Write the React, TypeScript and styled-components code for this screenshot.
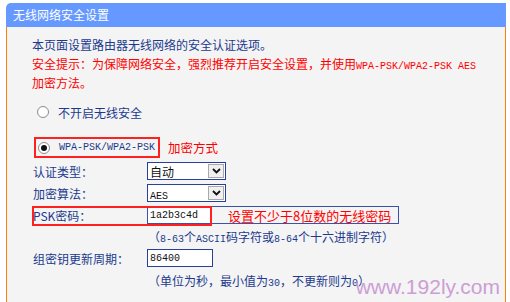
import React from "react";
import styled, { createGlobalStyle } from "styled-components";

const GlobalStyle = createGlobalStyle`
  html, body { margin: 0; padding: 0; background: #ffffff; }
  body { font-family: "Noto Sans CJK SC", "Noto Sans", sans-serif; }
  * { box-sizing: border-box; }
`;

const NAVY = "#1b3a8e";
const RED = "#ff0000";

const Page = styled.div`
  width: 510px;
  height: 302px;
  padding: 3px 4px 0 6px;
  overflow: hidden;
`;

const Panel = styled.div`
  display: flex;
  flex-direction: column;
  height: 100%;
`;

const TitleBar = styled.div`
  height: 24px;
  background: #6699ff;
  border-top-left-radius: 5px;
  color: #ffffff;
  font-size: 12px;
  line-height: 24px;
  padding-left: 7px;
`;

const Body = styled.div`
  flex: 1;
  position: relative;
  background: #f4f4f4;
  border-left: 1px solid #ff8000;
  border-right: 1px solid #ff8000;
  padding: 8px 0 0 25px;
`;

const Line = styled.div<{ $red?: boolean }>`
  font-size: 12px;
  line-height: 19px;
  height: 19px;
  white-space: nowrap;
  color: ${(p) => (p.$red ? RED : NAVY)};
`;

const Mono = styled.span<{ $size?: number }>`
  font-family: "Liberation Mono", monospace;
  font-size: ${(p) => p.$size ?? 10}px;
`;

const RadioRow = styled.div`
  display: flex;
  align-items: center;
  gap: 9px;
  height: 20px;
  margin-top: 10px;
  padding-left: 5px;
  font-size: 12px;
  color: ${NAVY};
`;

const RadioDot = styled.span<{ $checked?: boolean }>`
  flex: none;
  width: 12px;
  height: 12px;
  border-radius: 50%;
  border: 1px solid #8c8c8c;
  background: #ffffff;
  display: flex;
  align-items: center;
  justify-content: center;
  &::after {
    content: "";
    width: 6px;
    height: 6px;
    border-radius: 50%;
    background: #111111;
    display: ${(p) => (p.$checked ? "block" : "none")};
  }
`;

const ModeRow = styled.div`
  display: flex;
  align-items: center;
  height: 21px;
  margin-top: 15px;
  padding-left: 2px;
`;

const Highlight = styled.div`
  display: flex;
  align-items: center;
  gap: 9px;
  width: 126px;
  height: 21px;
  border: 2px solid #ff2020;
  padding-left: 2px;
  color: ${NAVY};
`;

const Note = styled.span<{ $size?: number }>`
  color: ${RED};
  font-size: ${(p) => p.$size ?? 12.5}px;
  white-space: nowrap;
`;

const NoteGap = styled(Note)`
  margin-left: 8px;
`;

const Form = styled.div`
  margin-top: 2px;
`;

const FormRow = styled.div<{ $h?: number }>`
  position: relative;
  display: flex;
  align-items: center;
  height: ${(p) => p.$h ?? 22}px;
  padding-left: 1px;
`;

const Label = styled.div`
  width: 114px;
  flex: none;
  font-size: 12px;
  color: ${NAVY};
  white-space: nowrap;
`;

const SelectBox = styled.div`
  display: flex;
  align-items: center;
  justify-content: space-between;
  width: 79px;
  height: 18px;
  border: 1px solid #29409a;
  background: #ffffff;
  padding-left: 2px;
  font-size: 12px;
  color: #111111;
`;

const ArrowBtn = styled.span`
  display: flex;
  align-items: center;
  justify-content: center;
  width: 16px;
  height: 14px;
  margin-right: 1px;
  background: #f0f0f0;
  border: 1px solid #a8a8a8;
`;

const TextInput = styled.div<{ $w: number }>`
  display: flex;
  align-items: center;
  width: ${(p) => p.$w}px;
  height: 18px;
  border: 1px solid #29409a;
  background: #ffffff;
  padding-left: 2px;
  color: #111111;
`;

const HintBox = styled.div`
  display: flex;
  align-items: center;
  width: 252px;
  height: 18px;
  border: 1px solid #3a52a8;
`;

const InnerInput = styled.div`
  display: flex;
  align-items: center;
  width: 64px;
  height: 100%;
  background: #ffffff;
  border-right: 1px solid #3a52a8;
  padding-left: 2px;
  color: #111111;
`;

const HintText = styled(Note)`
  margin-left: 16px;
`;

const PskHighlight = styled.div`
  position: absolute;
  left: 0;
  top: 2px;
  width: 180px;
  height: 20px;
  border: 2px solid #ff2020;
  z-index: 1;
  pointer-events: none;
`;

const Help = styled.div<{ $h: number }>`
  height: ${(p) => p.$h}px;
  line-height: ${(p) => p.$h}px;
  padding-left: 116px;
  font-size: 12px;
  color: ${NAVY};
  white-space: nowrap;
`;

const Watermark = styled.div`
  position: absolute;
  right: 5px;
  bottom: 5px;
  font-family: "Liberation Sans", Arial, sans-serif;
  font-size: 21px;
  line-height: 21px;
  color: #cc9ed4;
`;

const Chevron = () => (
  <svg width="9" height="6" viewBox="0 0 9 6">
    <path d="M1 1 L4.5 4.5 L8 1" fill="none" stroke="#111" strokeWidth="1.8" />
  </svg>
);

const Select = ({ children }: { children: React.ReactNode }) => (
  <SelectBox>
    <span>{children}</span>
    <ArrowBtn>
      <Chevron />
    </ArrowBtn>
  </SelectBox>
);

export default function App() {
  return (
    <>
      <GlobalStyle />
      <Page>
        <Panel>
          <TitleBar>无线网络安全设置</TitleBar>
          <Body>
            <Line>本页面设置路由器无线网络的安全认证选项。</Line>
            <Line $red>
              安全提示：为保障网络安全，强烈推荐开启安全设置，并使用<Mono>WPA-PSK/WPA2-PSK AES</Mono>
            </Line>
            <Line $red>加密方法。</Line>

            <RadioRow>
              <RadioDot />
              <span>不开启无线安全</span>
            </RadioRow>

            <ModeRow>
              <Highlight>
                <RadioDot $checked />
                <Mono>WPA-PSK/WPA2-PSK</Mono>
              </Highlight>
              <NoteGap>加密方式</NoteGap>
            </ModeRow>

            <Form>
              <FormRow>
                <Label>认证类型：</Label>
                <Select>自动</Select>
              </FormRow>
              <FormRow>
                <Label>加密算法：</Label>
                <Select>
                  <Mono>AES</Mono>
                </Select>
              </FormRow>
              <FormRow>
                <PskHighlight />
                <Label>PSK密码：</Label>
                <HintBox>
                  <InnerInput>
                    <Mono>1a2b3c4d</Mono>
                  </InnerInput>
                  <HintText $size={13}>设置不少于8位数的无线密码</HintText>
                </HintBox>
              </FormRow>
              <Help $h={22}>
                （<Mono $size={10}>8-63</Mono>个<Mono $size={10}>ASCII</Mono>码字符或<Mono $size={10}>8-64</Mono>个十六进制字符）
              </Help>
              <FormRow $h={20}>
                <Label>组密钥更新周期：</Label>
                <TextInput $w={66}>
                  <Mono>86400</Mono>
                </TextInput>
              </FormRow>
              <Help $h={25}>
                （单位为秒，最小值为<Mono $size={10}>30</Mono>，不更新则为<Mono $size={10}>0</Mono>）
              </Help>
            </Form>

            <Watermark>www.192ly.com</Watermark>
          </Body>
        </Panel>
      </Page>
    </>
  );
}
